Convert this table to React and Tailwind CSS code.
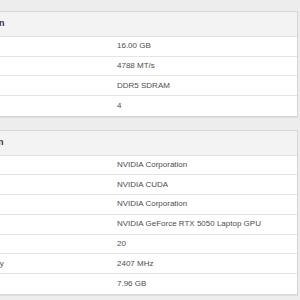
import React from "react";

const sections = [
  {
    title: "RAM Information",
    rows: [
      ["Total Memory", "16.00 GB"],
      ["Speed", "4788 MT/s"],
      ["Type", "DDR5 SDRAM"],
      ["Slots", "4"],
    ],
  },
  {
    title: "GPU Information",
    rows: [
      ["Vendor", "NVIDIA Corporation"],
      ["Platform", "NVIDIA CUDA"],
      ["Manufacturer", "NVIDIA Corporation"],
      ["Device Name", "NVIDIA GeForce RTX 5050 Laptop GPU"],
      ["Compute Units", "20"],
      ["Maximum Frequency", "2407 MHz"],
      ["Global Memory", "7.96 GB"],
    ],
  },
];

export default function App() {
  return (
    <div className="w-[300px] h-[300px] overflow-hidden bg-[#ededed] font-['Liberation_Sans',Arial,sans-serif]">
      <div className="-ml-[100px] w-[398px] pt-[11px] flex flex-col gap-[13px]">
        {sections.map((s) => (
          <div
            key={s.title}
            className="border border-[#d6d6d6] bg-white shadow-[0_1px_1px_rgba(0,0,0,0.06)]"
          >
            {/* Header */}
            <div className="h-[25px] flex items-center pl-[31px] bg-[#f3f3f3] border-b border-[#e2e2e2] text-[9px] font-bold text-[#333]">
              {s.title}
            </div>

            {/* Rows */}
            {s.rows.map(([label, value], i) => (
              <div
                key={label}
                className={`h-[19.7px] flex items-center text-[8px] text-[#4d4d4d] ${
                  i < s.rows.length - 1 ? "border-b border-[#e4e4e4]" : ""
                }`}
              >
                <div className="w-[216px] pl-[28px] whitespace-nowrap">
                  {label}
                </div>
                <div className="whitespace-nowrap">{value}</div>
              </div>
            ))}
          </div>
        ))}
      </div>
    </div>
  );
}
